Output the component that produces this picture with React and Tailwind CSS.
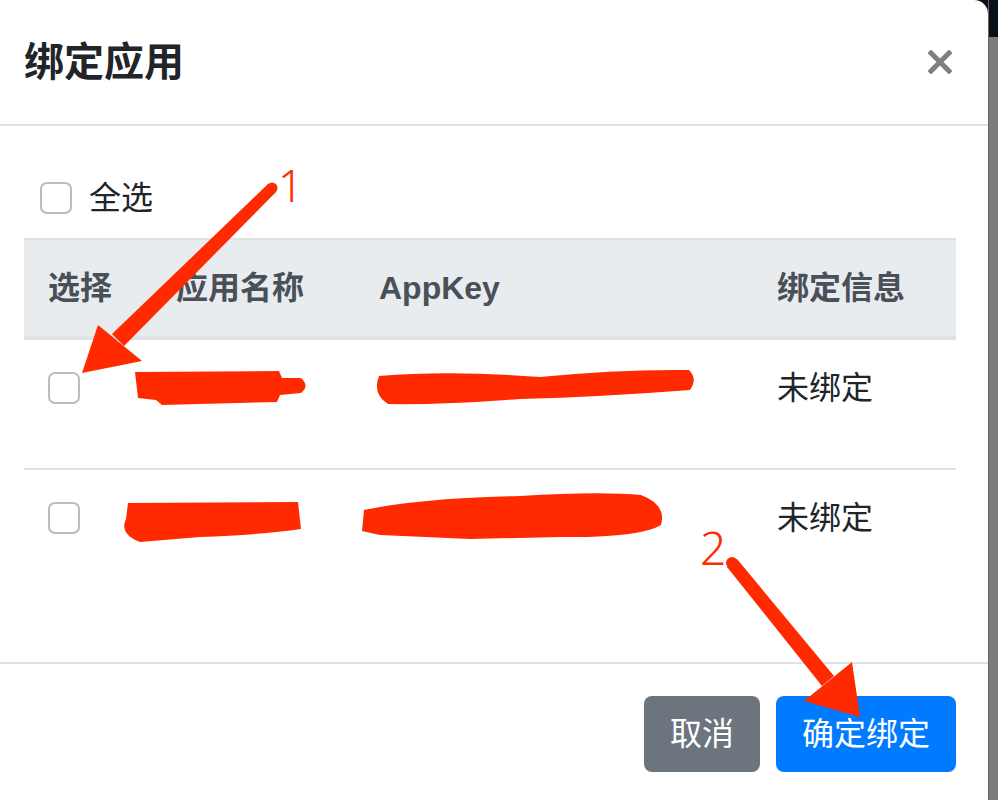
import React from "react";

const font = { fontFamily: '"Liberation Sans", "Noto Sans CJK SC", sans-serif' };

function Box() {
  return <div className="w-[32px] h-[32px] rounded-[7px] border-2 border-[#b8bcc2] bg-white shrink-0" />;
}

export default function App() {
  return (
    <div
      className="relative w-[998px] h-[800px] flex overflow-hidden bg-[linear-gradient(to_bottom,#0b1018_37px,#7b7b7b_37px)]"
      style={font}
    >
      <div className="w-[988px] h-[800px] bg-white rounded-tr-[14px] flex flex-col shrink-0">
        {/* header */}
        <div className="h-[126px] border-b-2 border-[#dee2e6] flex items-center justify-between pl-[24px] pr-[36px]">
          <div className="text-[40px] font-bold text-[#212529] leading-none">绑定应用</div>
          <svg width="24" height="24" viewBox="0 0 24 24">
            <path d="M3 3 L21 21 M21 3 L3 21" stroke="#7f7f7f" strokeWidth="5" strokeLinecap="square" />
          </svg>
        </div>
        {/* body */}
        <div className="h-[536px] pl-[24px] pr-[32px] pt-[56px]">
          <div className="flex items-center h-[32px] pl-[16px]">
            <Box />
            <span className="ml-[17px] text-[32px] text-[#212529] leading-none">全选</span>
          </div>
          <div className="mt-[24px] w-[932px]">
            <div className="grid grid-cols-[128px_203px_398px_203px] h-[102px] bg-[#e9ecef] border-t-2 border-b-4 border-[#dee2e6] text-[32px] font-bold text-[#495057]">
              <div className="pl-[24px] flex items-center">选择</div>
              <div className="pl-[24px] flex items-center">应用名称</div>
              <div className="pl-[24px] flex items-center">AppKey</div>
              <div className="pl-[24px] flex items-center">绑定信息</div>
            </div>
            <div className="grid grid-cols-[128px_203px_398px_203px] h-[130px] border-b-2 border-[#dee2e6] text-[32px] text-[#212529]">
              <div className="pl-[24px] pt-[24px]"><div className="h-[48px] flex items-center"><Box /></div></div>
              <div className="pl-[24px] pt-[24px]" />
              <div className="pl-[24px] pt-[24px]" />
              <div className="pl-[24px] pt-[24px]"><div className="h-[48px] flex items-center">未绑定</div></div>
            </div>
            <div className="grid grid-cols-[128px_203px_398px_203px] h-[96px] text-[32px] text-[#212529]">
              <div className="pl-[24px] pt-[24px]"><div className="h-[48px] flex items-center"><Box /></div></div>
              <div className="pl-[24px] pt-[24px]" />
              <div className="pl-[24px] pt-[24px]" />
              <div className="pl-[24px] pt-[24px]"><div className="h-[48px] flex items-center">未绑定</div></div>
            </div>
          </div>
        </div>
        {/* footer */}
        <div className="flex-1 border-t-2 border-[#dee2e6] pt-[32px] pr-[32px] flex justify-end items-start gap-[16px]">
          <div className="w-[116px] h-[76px] rounded-[8px] bg-[#6c757d] text-white text-[32px] flex items-center justify-center">取消</div>
          <div className="w-[180px] h-[76px] rounded-[8px] bg-[#007bff] text-white text-[32px] flex items-center justify-center">确定绑定</div>
        </div>
      </div>
      <div className="w-[10px] border-l border-[#666666]" />

      {/* annotations overlay */}
      <svg className="absolute left-0 top-0 pointer-events-none" width="998" height="800" viewBox="0 0 998 800">
        <g fill="#ff2a00">
          {/* scribbles */}
          <path d="M135 372 L279 371 L282 378 L301 378 Q310 386 301 393 L280 395 L277 402 L162 405 L156 400 L138 398 Z" />
          <path d="M379 376 Q450 370 540 377 Q620 369 689 370 Q698 379 690 390 Q600 397 520 399 Q440 405 388 404 Q372 394 379 376 Z" />
          <path d="M128 503 L298 502 L301 529 Q260 535 200 537 L140 542 Q119 534 126 519 Z" />
          <path d="M364 510 Q420 498 520 496 Q600 491 641 495 Q667 505 661 525 Q640 538 560 537 L470 539 L380 535 L362 531 Z" />
          {/* arrow 1 */}
          <path d="M268 184 L276 192 L124 346 L112 334 Z" />
          <circle cx="272" cy="188" r="5.5" />
          <polygon points="82,373 98,325 142,361" />
          {/* arrow 2 */}
          <path d="M727 567 L737 559 L834 676 L822 686 Z" />
          <circle cx="732" cy="563" r="6" />
          <polygon points="804,701 852,662 860,717" />
        </g>
        <text x="278" y="202" fontSize="44" fill="#ff2a00" fontFamily="Noto Sans, sans-serif" fontWeight="300">1</text>
        <text x="700" y="565" fontSize="46" fill="#ff2a00" fontFamily="Noto Sans, sans-serif" fontWeight="300">2</text>
      </svg>
    </div>
  );
}
